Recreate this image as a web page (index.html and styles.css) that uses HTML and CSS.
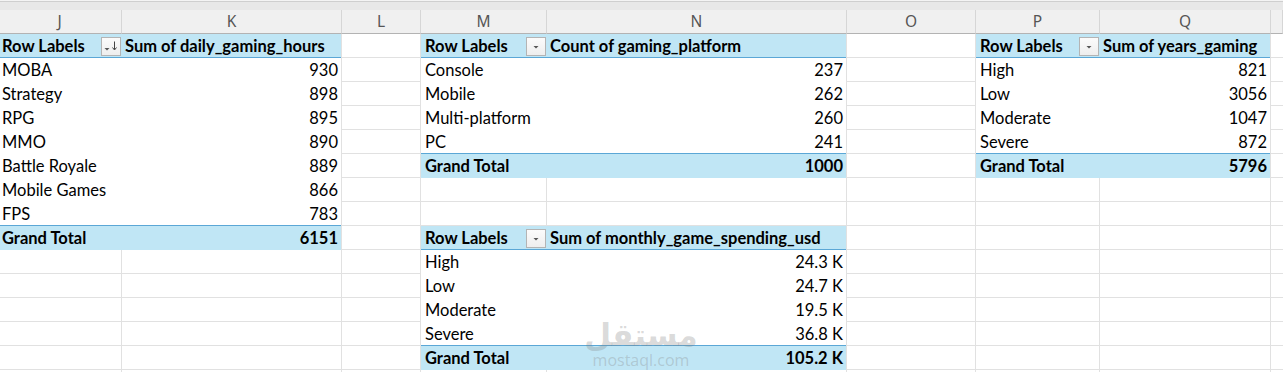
FILE: index.html
```html
<!DOCTYPE html>
<html>
<head>
<meta charset="utf-8">
<link rel="stylesheet" href="styles.css">
</head>
<body>
<div class="topband"></div>
<div class="sheet">
  <div class="colhead">J</div>
  <div class="colhead">K</div>
  <div class="colhead">L</div>
  <div class="colhead">M</div>
  <div class="colhead">N</div>
  <div class="colhead">O</div>
  <div class="colhead">P</div>
  <div class="colhead">Q</div>
  <div class="colhead"></div>

  <section class="pivot pv-hours">
    <div class="prow phead">
      <div class="plabel">Row Labels<span class="fbtn"><svg width="18" height="17" viewBox="0 0 18 17"><polygon points="2.5,10 7.5,10 5,12.5" fill="#555"/><path d="M12.5 3.5v8" stroke="#444" stroke-width="1"/><path d="M10.5 9.5l2 2.5 2-2.5" fill="none" stroke="#444" stroke-width="1"/></svg></span></div>
      <div class="pval">Sum of daily_gaming_hours</div>
    </div>
    <div class="prow"><div class="plabel">MOBA</div><div class="pval num">930</div></div>
    <div class="prow"><div class="plabel">Strategy</div><div class="pval num">898</div></div>
    <div class="prow"><div class="plabel">RPG</div><div class="pval num">895</div></div>
    <div class="prow"><div class="plabel">MMO</div><div class="pval num">890</div></div>
    <div class="prow"><div class="plabel">Battle Royale</div><div class="pval num">889</div></div>
    <div class="prow"><div class="plabel">Mobile Games</div><div class="pval num">866</div></div>
    <div class="prow"><div class="plabel">FPS</div><div class="pval num">783</div></div>
    <div class="prow ptotal"><div class="plabel">Grand Total</div><div class="pval num">6151</div></div>
  </section>

  <section class="pivot pv-platform">
    <div class="prow phead">
      <div class="plabel">Row Labels<span class="fbtn"><svg width="18" height="17" viewBox="0 0 18 17"><polygon points="6.5,8 11.5,8 9,10.5" fill="#555"/></svg></span></div>
      <div class="pval">Count of gaming_platform</div>
    </div>
    <div class="prow"><div class="plabel">Console</div><div class="pval num">237</div></div>
    <div class="prow"><div class="plabel">Mobile</div><div class="pval num">262</div></div>
    <div class="prow"><div class="plabel">Multi-platform</div><div class="pval num">260</div></div>
    <div class="prow"><div class="plabel">PC</div><div class="pval num">241</div></div>
    <div class="prow ptotal"><div class="plabel">Grand Total</div><div class="pval num">1000</div></div>
  </section>

  <section class="pivot pv-spend">
    <div class="prow phead">
      <div class="plabel">Row Labels<span class="fbtn"><svg width="18" height="17" viewBox="0 0 18 17"><polygon points="6.5,8 11.5,8 9,10.5" fill="#555"/></svg></span></div>
      <div class="pval">Sum of monthly_game_spending_usd</div>
    </div>
    <div class="prow"><div class="plabel">High</div><div class="pval num">24.3 K</div></div>
    <div class="prow"><div class="plabel">Low</div><div class="pval num">24.7 K</div></div>
    <div class="prow"><div class="plabel">Moderate</div><div class="pval num">19.5 K</div></div>
    <div class="prow"><div class="plabel">Severe</div><div class="pval num">36.8 K</div></div>
    <div class="prow ptotal"><div class="plabel">Grand Total</div><div class="pval num">105.2 K</div></div>
  </section>

  <section class="pivot pv-years">
    <div class="prow phead">
      <div class="plabel">Row Labels<span class="fbtn"><svg width="18" height="17" viewBox="0 0 18 17"><polygon points="6.5,8 11.5,8 9,10.5" fill="#555"/></svg></span></div>
      <div class="pval">Sum of years_gaming</div>
    </div>
    <div class="prow"><div class="plabel">High</div><div class="pval num">821</div></div>
    <div class="prow"><div class="plabel">Low</div><div class="pval num">3056</div></div>
    <div class="prow"><div class="plabel">Moderate</div><div class="pval num">1047</div></div>
    <div class="prow"><div class="plabel">Severe</div><div class="pval num">872</div></div>
    <div class="prow ptotal"><div class="plabel">Grand Total</div><div class="pval num">5796</div></div>
  </section>
</div>
<div class="watermark">
  <span class="wm-ar">مستقل</span>
  <span class="wm-en">mostaql.com</span>
</div>
</body>
</html>
```
FILE: styles.css
```css
* { box-sizing: border-box; }

html, body {
  margin: 0;
  padding: 0;
  background: #ffffff;
  overflow: hidden;
}

body {
  position: relative;
  width: 1283px;
  height: 372px;
  font-family: Lato, "Liberation Sans", sans-serif;
  font-size: 16.5px;
  color: #000;
}

.topband {
  height: 10px;
  background: linear-gradient(#f4f4f4 0 1px, #cfcfcf 1px 2px, #e8e8e8 2px 100%);
}

.sheet {
  display: grid;
  margin-left: -2px;
  width: 1285px;
  grid-template-columns: 124px 220px 79px 126px 300px 129px 124px 171px 1fr;
  grid-template-rows: repeat(16, 24px);
  background:
    linear-gradient(#e1e1e1, #e1e1e1) 123px 0 / 1px 100% no-repeat,
    linear-gradient(#e1e1e1, #e1e1e1) 343px 0 / 1px 100% no-repeat,
    linear-gradient(#e1e1e1, #e1e1e1) 422px 0 / 1px 100% no-repeat,
    linear-gradient(#e1e1e1, #e1e1e1) 548px 0 / 1px 100% no-repeat,
    linear-gradient(#e1e1e1, #e1e1e1) 848px 0 / 1px 100% no-repeat,
    linear-gradient(#e1e1e1, #e1e1e1) 977px 0 / 1px 100% no-repeat,
    linear-gradient(#e1e1e1, #e1e1e1) 1101px 0 / 1px 100% no-repeat,
    linear-gradient(#e1e1e1, #e1e1e1) 1272px 0 / 1px 100% no-repeat,
    repeating-linear-gradient(to bottom, transparent 0 23px, #e1e1e1 23px 24px);
}

.colhead {
  grid-row: 1;
  background: #f0f0f0;
  border-right: 1px solid #d6d6d6;
  border-bottom: 1px solid #b3b3b3;
  color: #555555;
  font-family: "Noto Sans", Lato, sans-serif;
  font-size: 15.5px;
  line-height: 23px;
  text-align: center;
}

.pivot {
  align-self: start;
  margin-right: 1px;
  background: #ffffff;
  display: flex;
  flex-direction: column;
}

.pv-hours { grid-column: 1 / 3; grid-row: 2 / span 9; --c1: 124px; }
.pv-platform { grid-column: 4 / 6; grid-row: 2 / span 6; --c1: 126px; }
.pv-spend { grid-column: 4 / 6; grid-row: 10 / span 6; --c1: 126px; }
.pv-years { grid-column: 7 / 9; grid-row: 2 / span 6; --c1: 124px; }

.prow {
  display: grid;
  grid-template-columns: var(--c1) 1fr;
  height: 24px;
  align-items: center;
  line-height: 24px;
}

.plabel {
  padding-left: 4px;
  white-space: nowrap;
  display: flex;
  align-items: center;
  justify-content: space-between;
}

.pval {
  padding-left: 3px;
  padding-right: 3px;
  white-space: nowrap;
}

.pval.num { text-align: right; }

.phead {
  background: #c0e6f5;
  border-bottom: 1px solid #5ba7d6;
  font-weight: 700;
}

.phead .plabel { padding-right: 1px; }

.ptotal {
  margin-top: -1px;
  height: 25px;
  background: #c0e6f5;
  border-top: 1px solid #5ba7d6;
  font-weight: 700;
}

.fbtn {
  display: flex;
  width: 20px;
  height: 19px;
  border: 1px solid #b4b4b4;
  background: linear-gradient(#fbfbfb, #eeeeee);
}

.watermark {
  position: absolute;
  left: 590px;
  top: 318px;
  width: 102px;
  display: flex;
  flex-direction: column;
  align-items: center;
  color: rgba(130, 130, 130, 0.3);
  pointer-events: none;
}

.wm-ar {
  font-family: "DejaVu Sans", sans-serif;
  font-weight: 700;
  font-size: 31px;
  line-height: 34px;
}

.wm-en {
  font-family: "Open Sans", sans-serif;
  font-size: 16px;
  line-height: 16px;
}
```
